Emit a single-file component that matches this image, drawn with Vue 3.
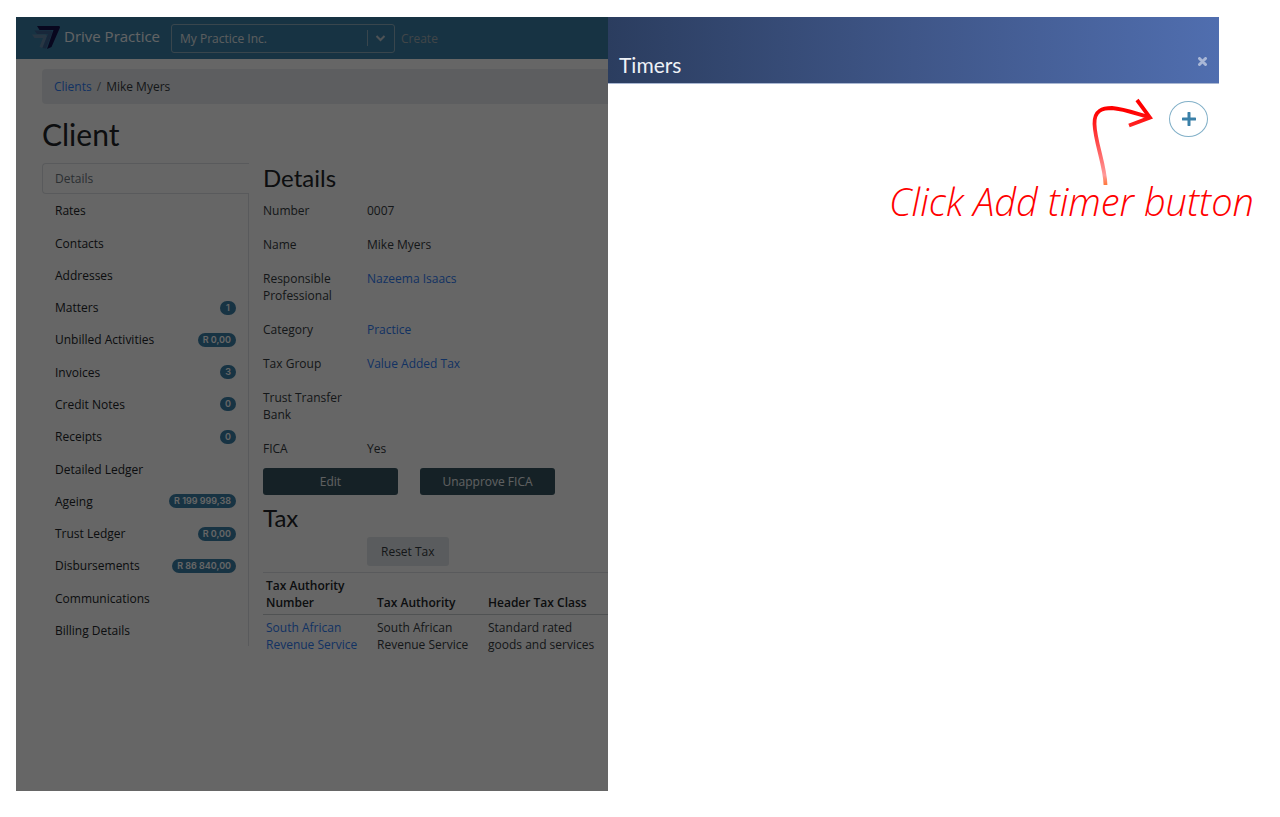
<script setup>
import { ref } from 'vue'

const practice = ref('My Practice Inc.')

const menu = [
  { label: 'Details', active: true },
  { label: 'Rates' },
  { label: 'Contacts' },
  { label: 'Addresses' },
  { label: 'Matters', badge: '1' },
  { label: 'Unbilled Activities', badge: 'R 0,00' },
  { label: 'Invoices', badge: '3' },
  { label: 'Credit Notes', badge: '0' },
  { label: 'Receipts', badge: '0' },
  { label: 'Detailed Ledger' },
  { label: 'Ageing', badge: 'R 199 999,38' },
  { label: 'Trust Ledger', badge: 'R 0,00' },
  { label: 'Disbursements', badge: 'R 86 840,00' },
  { label: 'Communications' },
  { label: 'Billing Details' },
]

const details = [
  { label: 'Number', value: '0007' },
  { label: 'Name', value: 'Mike Myers' },
  { label: 'Responsible Professional', value: 'Nazeema Isaacs', link: true },
  { label: 'Category', value: 'Practice', link: true },
  { label: 'Tax Group', value: 'Value Added Tax', link: true },
  { label: 'Trust Transfer Bank', value: '' },
  { label: 'FICA', value: 'Yes' },
]
</script>

<template>
  <div class="stage">
    <div class="shell">
      <div class="page">
        <header class="navbar">
          <a class="brand" href="#">
            <svg class="logo" width="28" height="24" viewBox="0 0 28 24" aria-hidden="true">
              <path d="M0 8.500h13.500l1.500 1.500-4.500 12-3-1 3.500-9H2.500z" fill="#6488a8" />
              <path d="M2.500 4.500H19l1.500 1.500L14 22.500l-3.500-.5L16 8H5z" fill="#3c6192" />
              <path d="M5 0h22.500L28 1.500 19.500 21l-4.500 2L21.500 4H7.500z" fill="#15124c" />
            </svg>
            <span>Drive Practice</span>
          </a>
          <div class="picker">
            <select v-model="practice" aria-label="Practice">
              <option>My Practice Inc.</option>
            </select>
            <svg class="caret" width="28" height="16" viewBox="0 0 28 16" aria-hidden="true">
              <path d="M.5 0v16" stroke="#8fb0c0" />
              <path d="M9.500 6l4 4 4-4" fill="none" stroke="#c4ced4" stroke-width="2" />
            </svg>
          </div>
          <a class="create" href="#">Create</a>
        </header>

        <main class="content">
          <nav class="crumbs" aria-label="Breadcrumb">
            <a href="#">Clients</a><span class="slash">/</span><span>Mike Myers</span>
          </nav>
          <h1>Client</h1>
          <div class="columns">
            <nav class="menu" aria-label="Client sections">
              <a
                v-for="item in menu"
                :key="item.label"
                href="#"
                :class="['item', { active: item.active }]"
              >
                <span>{{ item.label }}</span>
                <span v-if="item.badge" class="badge">{{ item.badge }}</span>
              </a>
            </nav>

            <section class="record">
              <h2>Details</h2>
              <dl>
                <template v-for="row in details" :key="row.label">
                  <dt>{{ row.label }}</dt>
                  <dd>
                    <a v-if="row.link" href="#">{{ row.value }}</a>
                    <template v-else>{{ row.value }}</template>
                  </dd>
                </template>
              </dl>
              <div class="actions">
                <button type="button" class="dark">Edit</button>
                <button type="button" class="dark">Unapprove FICA</button>
              </div>
              <h2 class="tax">Tax</h2>
              <button type="button" class="light">Reset Tax</button>
              <table>
                <thead>
                  <tr>
                    <th>Tax Authority Number</th>
                    <th>Tax Authority</th>
                    <th>Header Tax Class</th>
                  </tr>
                </thead>
                <tbody>
                  <tr>
                    <td><a href="#">South African Revenue Service</a></td>
                    <td>South African Revenue Service</td>
                    <td>Standard rated goods and services</td>
                  </tr>
                </tbody>
              </table>
            </section>
          </div>
        </main>
        <div class="backdrop"></div>
      </div>

      <aside class="panel">
        <header class="panel-head">
          <h2>Timers</h2>
          <button type="button" class="close" aria-label="Close">
            <svg width="9" height="9" viewBox="0 0 9 9" aria-hidden="true">
              <path d="M1.500 1.500l6 6M7.500 1.500l-6 6" stroke="#a9b7d6" stroke-width="3" stroke-linecap="round" />
            </svg>
          </button>
        </header>
        <div class="panel-body">
          <button type="button" class="add" aria-label="Add timer">
            <svg width="14" height="14" viewBox="0 0 14 14" aria-hidden="true">
              <path d="M7 1v12M1 7h12" stroke="#3a80a8" stroke-width="3" stroke-linecap="round" />
            </svg>
          </button>
        </div>
        <svg class="arrow" width="70" height="92" viewBox="0 0 70 92" aria-hidden="true">
          <defs>
            <linearGradient id="fade" gradientUnits="userSpaceOnUse" x1="0" y1="0" x2="0" y2="92">
              <stop offset="0.15" stop-color="#ff0000" />
              <stop offset="0.85" stop-color="#ff9a9a" />
              <stop offset="0.95" stop-color="#ff7a40" />
            </linearGradient>
          </defs>
          <path
            d="M20.500 88C20 68 10 45 9.500 27C9 13 18 11 27 11C40 12 52 17 65 20.500M52 3L65 20.500L44 28.500"
            fill="none"
            stroke="url(#fade)"
            stroke-width="3.800"
          />
        </svg>
        <p class="note">Click Add timer button</p>
      </aside>
    </div>
  </div>
</template>

<style>
body {
  margin: 0;
  background: #fff;
}
</style>

<style scoped>
* {
  box-sizing: border-box;
}
.stage {
  min-height: 100vh;
  display: flex;
  padding: 17px 61px 26px 16px;
  font-family: "Open Sans", "Noto Sans", sans-serif;
  font-size: 12px;
  line-height: 17px;
  color: #343a40;
}
.shell {
  flex: 1;
  display: grid;
  grid-template-columns: 592fr 611fr;
}
a {
  color: #2f7df6;
  text-decoration: none;
}
button,
select {
  font: inherit;
}
h1,
h2,
p,
dl,
dd {
  margin: 0;
}
h1,
h2 {
  font-family: Lato, sans-serif;
  font-weight: 400;
  color: #212529;
}
.page {
  position: relative;
  overflow: hidden;
  background: #fff;
}
.backdrop {
  position: absolute;
  inset: 0;
  background: rgba(0, 0, 0, 0.6);
}
.navbar {
  display: flex;
  align-items: center;
  height: 42px;
  padding-left: 16px;
  background: #3a80a8;
}
.brand {
  display: flex;
  align-items: center;
  gap: 4px;
  width: 139px;
  font-size: 15px;
  color: #f4f8fa;
  white-space: nowrap;
}
.brand span {
  padding-bottom: 3px;
}
.picker {
  position: relative;
  width: 224px;
}
.picker select {
  display: block;
  width: 100%;
  height: 29px;
  padding: 0 8px;
  border: 1px solid #8fb0c0;
  border-radius: 3px;
  background: transparent;
  color: #e2e8ea;
  appearance: none;
}
.caret {
  position: absolute;
  right: 0;
  top: 6px;
  pointer-events: none;
}
.create {
  margin-left: 6px;
  color: #a3aeb4;
}
.content {
  padding: 10px 0 0 26px;
}
.crumbs {
  display: flex;
  gap: 5px;
  padding: 9px 12px;
  border-radius: 4px 0 0 4px;
  background: #e9ecef;
}
.slash {
  color: #6c757d;
}
h1 {
  margin: 11px 0 10px;
  font-size: 30px;
  line-height: 38px;
}
.columns {
  display: grid;
  grid-template-columns: 207px 1fr;
  gap: 14px;
}
.menu {
  display: flex;
  flex-direction: column;
  justify-content: space-between;
  margin-bottom: 10px;
  background: linear-gradient(#dee2e6, #dee2e6) right / 1px 100% no-repeat;
}
.item {
  display: flex;
  align-items: center;
  justify-content: space-between;
  height: 31px;
  padding: 0 13px;
  color: #212529;
}
.item.active {
  border: 1px solid #dee2e6;
  border-right: 0;
  border-radius: 4px 0 0 4px;
  padding: 0 12px;
  background: #fff;
  color: #6c757d;
}
.badge {
  min-width: 16px;
  padding: 0 5px;
  border-radius: 7px;
  background: #3a80a8;
  color: #fff;
  font-family: Inter, sans-serif;
  font-size: 9px;
  font-weight: 600;
  line-height: 14px;
  text-align: center;
}
h2 {
  font-size: 24px;
  line-height: 29px;
}
dl {
  display: grid;
  grid-template-columns: 82px 1fr;
  column-gap: 22px;
  row-gap: 17px;
  padding: 10px 0 11px;
}
.actions {
  display: flex;
  gap: 22px;
}
.dark {
  width: 135px;
  height: 27px;
  border: 0;
  border-radius: 3px;
  background: #35545f;
  color: #eef1f2;
}
.tax {
  padding: 8px 0 5px;
}
.light {
  display: block;
  height: 29px;
  margin-left: 104px;
  padding: 0 14px;
  border: 0;
  border-radius: 3px;
  background: #e2e6ea;
  color: #343a40;
}
table {
  width: 100%;
  margin-top: 6px;
  table-layout: fixed;
  border-collapse: collapse;
  border-top: 1px solid #dee2e6;
}
th,
td {
  width: 111px;
  padding: 4px 3px 3px;
  text-align: left;
  vertical-align: top;
}
th:last-child,
td:last-child {
  width: auto;
}
th {
  border-bottom: 1px solid #c8ccd0;
  font-weight: 600;
  vertical-align: bottom;
  color: #212529;
}
.panel {
  position: relative;
  background: #fff;
}
.panel-head {
  display: flex;
  align-items: flex-end;
  justify-content: space-between;
  height: 67px;
  padding: 0 11px 5px;
  border-bottom: 1px solid #a9b7d2;
  background: linear-gradient(90deg, #2b3d5f, #3f5688 50%, #506eaf);
}
.panel-head h2 {
  font-size: 21px;
  line-height: 26px;
  color: #eef1f6;
}
.close {
  display: flex;
  padding: 0 1px 12px;
  border: 0;
  background: none;
}
.panel-body {
  display: flex;
  justify-content: flex-end;
  padding: 17px 11px;
}
.add {
  display: flex;
  align-items: center;
  justify-content: center;
  width: 39px;
  height: 36px;
  padding: 0;
  border: 1px solid #82b0c8;
  border-radius: 50%;
  background: #fff;
}
.arrow {
  position: absolute;
  right: 64px;
  top: 80px;
}
.note {
  position: absolute;
  right: -35px;
  top: 164px;
  font-family: "Open Sans", sans-serif;
  font-size: 38px;
  font-style: italic;
  font-weight: 300;
  line-height: 40px;
  color: #f00;
  white-space: nowrap;
}
</style>
